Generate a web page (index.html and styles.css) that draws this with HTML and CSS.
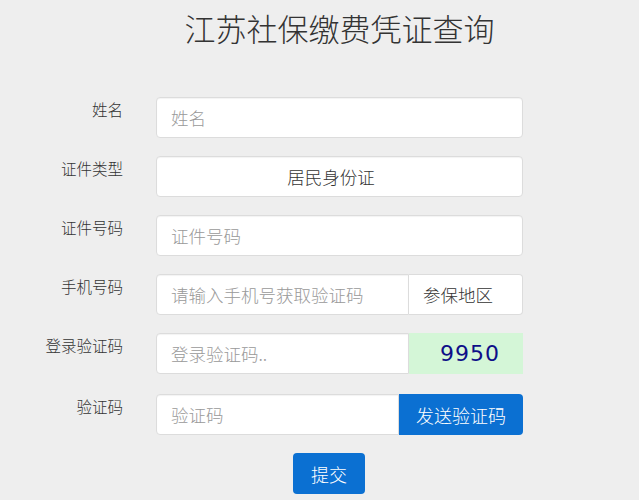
FILE: index.html
```html
<!DOCTYPE html>
<html lang="zh-CN">
<head>
<meta charset="utf-8">
<title>江苏社保缴费凭证查询</title>
<link rel="stylesheet" href="styles.css">
</head>
<body>
<div class="page">
  <h1 class="title">江苏社保缴费凭证查询</h1>
  <form class="form">
    <div class="row">
      <label class="label">姓名</label>
      <input class="control" type="text" placeholder="姓名">
    </div>
    <div class="row">
      <label class="label">证件类型</label>
      <div class="control select">居民身份证</div>
    </div>
    <div class="row">
      <label class="label">证件号码</label>
      <input class="control" type="text" placeholder="证件号码">
    </div>
    <div class="row">
      <label class="label">手机号码</label>
      <div class="group">
        <input class="control group-input" type="text" placeholder="请输入手机号获取验证码">
        <span class="addon addon-text">参保地区</span>
      </div>
    </div>
    <div class="row">
      <label class="label">登录验证码</label>
      <div class="group">
        <input class="control group-input" type="text" placeholder="登录验证码..">
        <span class="addon addon-code">9950</span>
      </div>
    </div>
    <div class="row row-sms">
      <label class="label">验证码</label>
      <div class="group">
        <input class="control group-input" type="text" placeholder="验证码">
        <button class="addon addon-btn" type="button">发送验证码</button>
      </div>
    </div>
    <div class="row row-submit">
      <span class="label"></span>
      <div class="submit-wrap"><button class="submit" type="button">提交</button></div>
    </div>
  </form>
</div>
</body>
</html>
```
FILE: styles.css
```css
* { box-sizing: border-box; }
html, body {
  margin: 0;
  padding: 0;
  background: #eeeeee;
}
body {
  font-family: "Noto Sans CJK SC", "Noto Sans", sans-serif;
  color: #333;
}
.page {
  display: grid;
  grid-template-columns: 123px 367px;
  column-gap: 33px;
}
.title {
  grid-column: 2;
  margin: 8px 0 0;
  height: 40px;
  line-height: 40px;
  font-size: 31px;
  font-weight: 300;
  text-align: center;
  color: #333;
  white-space: nowrap;
}
.form {
  grid-column: 1 / 3;
  display: flex;
  flex-direction: column;
  gap: 18px;
  margin-top: 49px;
}
.row {
  display: grid;
  grid-template-columns: 123px 367px;
  column-gap: 33px;
  align-items: start;
}
.row-sms { margin-top: 2px; }
.row-submit { margin-top: 0; }
.label {
  text-align: right;
  font-size: 15.5px;
  font-weight: 300;
  line-height: 24px;
  color: #333;
  white-space: nowrap;
}
.control {
  display: block;
  width: 100%;
  height: 41px;
  margin: 0;
  padding: 0 14px;
  border: 1px solid #dcdcdc;
  border-radius: 4px;
  background: #fff;
  box-shadow: inset 0 1px 1px rgba(0,0,0,0.05);
  font-family: "Noto Sans CJK SC", "Noto Sans", sans-serif;
  font-size: 17.5px;
  font-weight: 300;
  color: #333;
  outline: none;
}
.control::placeholder { color: #999; }
.select {
  line-height: 39px;
  text-align: center;
  padding-right: 31px;
}
.group {
  display: flex;
  height: 41px;
}
.group-input {
  flex: 1;
  min-width: 0;
  border-radius: 4px 0 0 4px;
}
.addon {
  flex: 0 0 114px;
  height: 41px;
  margin: 0;
  display: flex;
  align-items: center;
  font-family: "Noto Sans CJK SC", "Noto Sans", sans-serif;
}
.addon-text {
  padding-left: 14px;
  background: #fff;
  border: 1px solid #dcdcdc;
  border-left: none;
  border-radius: 0 4px 4px 0;
  font-size: 17.5px;
  font-weight: 300;
  color: #333;
}
.addon-code {
  justify-content: center;
  padding-left: 8px;
  background: #d4f6d7;
  font-family: "DejaVu Sans", sans-serif;
  font-size: 22px;
  color: #0e0e88;
  letter-spacing: 1px;
}
.addon-btn {
  flex-basis: 124px;
  justify-content: center;
  border: none;
  border-radius: 0 4px 4px 0;
  background: #0b70d2;
  color: #fff;
  font-size: 18px;
  font-weight: 300;
  cursor: pointer;
}
.submit-wrap {
  padding-left: 137px;
}
.submit {
  display: block;
  width: 72px;
  height: 41px;
  margin: 0;
  border: none;
  border-radius: 4px;
  background: #0b70d2;
  color: #fff;
  font-family: "Noto Sans CJK SC", "Noto Sans", sans-serif;
  font-size: 18px;
  font-weight: 300;
  cursor: pointer;
}
```
